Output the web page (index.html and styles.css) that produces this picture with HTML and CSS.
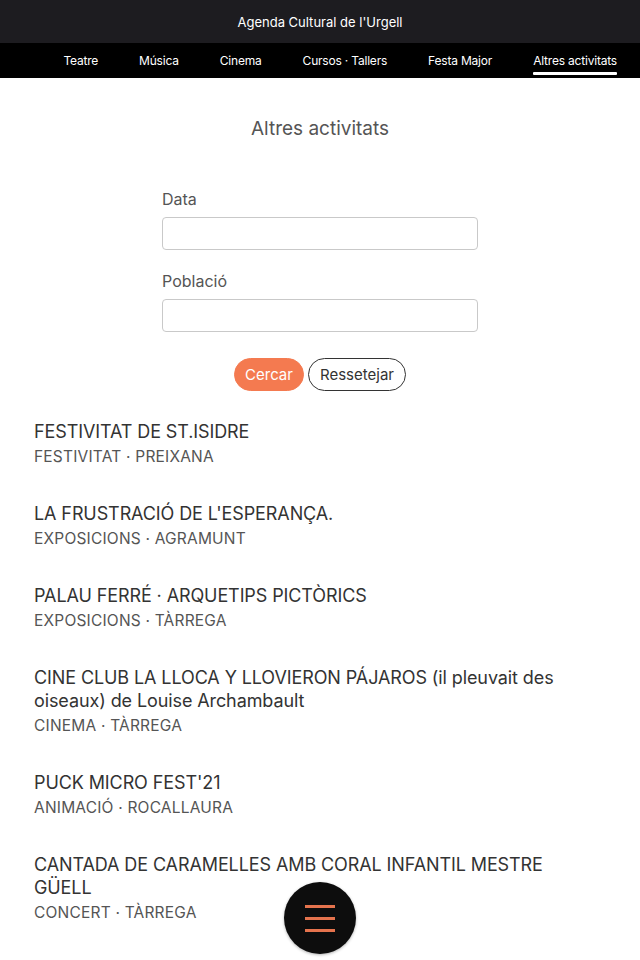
FILE: index.html
```html
<!DOCTYPE html>
<html lang="ca">
<head>
<meta charset="utf-8">
<title>Altres activitats</title>
<link rel="stylesheet" href="styles.css">
</head>
<body>
<header class="top">
  <div class="brand">Agenda Cultural de l'Urgell</div>
  <nav class="nav">
    <a class="nav-item">Teatre</a>
    <a class="nav-item">Música</a>
    <a class="nav-item">Cinema</a>
    <a class="nav-item">Cursos · Tallers</a>
    <a class="nav-item">Festa Major</a>
    <a class="nav-item active">Altres activitats</a>
  </nav>
</header>
<main class="main">
  <h1 class="page-title">Altres activitats</h1>
  <form class="filter">
    <label class="field-label">Data</label>
    <input class="field" type="text">
    <label class="field-label">Població</label>
    <input class="field field-last" type="text">
    <div class="actions">
      <button type="button" class="btn btn-primary">Cercar</button>
      <button type="button" class="btn btn-outline">Ressetejar</button>
    </div>
  </form>
  <ul class="events">
    <li class="event"><div class="event-title">FESTIVITAT DE ST.ISIDRE</div><div class="event-meta">FESTIVITAT · PREIXANA</div></li>
    <li class="event"><div class="event-title">LA FRUSTRACIÓ DE L'ESPERANÇA.</div><div class="event-meta">EXPOSICIONS · AGRAMUNT</div></li>
    <li class="event"><div class="event-title">PALAU FERRÉ · ARQUETIPS PICTÒRICS</div><div class="event-meta">EXPOSICIONS · TÀRREGA</div></li>
    <li class="event"><div class="event-title">CINE CLUB LA LLOCA Y LLOVIERON PÁJAROS (il pleuvait des oiseaux) de Louise Archambault</div><div class="event-meta">CINEMA · TÀRREGA</div></li>
    <li class="event"><div class="event-title">PUCK MICRO FEST'21</div><div class="event-meta">ANIMACIÓ · ROCALLAURA</div></li>
    <li class="event"><div class="event-title">CANTADA DE CARAMELLES AMB CORAL INFANTIL MESTRE GÜELL</div><div class="event-meta">CONCERT · TÀRREGA</div></li>
  </ul>
</main>
<button class="fab" type="button" aria-label="Menú">
  <span class="fab-bar"></span><span class="fab-bar"></span><span class="fab-bar"></span>
</button>
</body>
</html>
```
FILE: styles.css
```css
* { box-sizing: border-box; }
html, body { margin: 0; padding: 0; }
body {
  font-family: "Inter", "Noto Sans", sans-serif;
  background: #fff;
  color: #333;
  height: 960px;
  overflow: hidden;
}
.top { display: flex; flex-direction: column; }
.brand {
  background: #1d1c20;
  color: #fff;
  height: 43px;
  display: flex;
  align-items: center;
  justify-content: center;
  font-size: 13px;
}
.nav {
  background: #000;
  height: 35px;
  display: flex;
  align-items: center;
  justify-content: flex-end;
  padding-right: 23px;
}
.nav-item {
  color: #fff;
  font-size: 12px;
  height: 35px;
  display: flex;
  align-items: center;
  position: relative;
  margin-left: 41px;
  letter-spacing: -0.2px;
}
.nav-item:first-child { margin-left: 0; }
.nav-item.active::after {
  content: "";
  position: absolute;
  left: 0; right: 0;
  bottom: 3px;
  height: 3px;
  background: #fff;
  border-radius: 1px;
}
.main { display: flex; flex-direction: column; }
.page-title {
  margin: 39px 0 0;
  text-align: center;
  font-weight: 400;
  font-size: 19px;
  color: #555;
  line-height: 24px;
}
.filter {
  width: 316px;
  margin: 48px auto 0;
  display: flex;
  flex-direction: column;
}
.field-label {
  font-size: 16px;
  color: #555;
  line-height: 20px;
  margin-bottom: 8px;
}
.field {
  height: 33px;
  border: 1px solid #c9c9c9;
  border-radius: 4px;
  margin-bottom: 21px;
  font: inherit;
}
.field-last { margin-bottom: 26px; }
.actions { display: flex; justify-content: center; gap: 4px; }
.btn {
  font-family: inherit;
  font-size: 15px;
  height: 33px;
  border-radius: 17px;
  padding: 0;
  cursor: pointer;
}
.btn-primary { background: #f47a50; color: #fff; border: 1px solid #f47a50; width: 70px; }
.btn-outline { background: #fff; color: #333; border: 1px solid #333; width: 98px; }
.events { list-style: none; margin: 29px 0 0; padding: 0 44px 0 34px; display: flex; flex-direction: column; gap: 35px; }
.event-title { font-size: 18px; line-height: 23px; color: #333; letter-spacing: -0.1px; }
.event-meta { font-size: 15.5px; line-height: 20px; color: #555; margin-top: 4px; letter-spacing: 0.2px; }
.fab {
  position: fixed;
  left: 284px;
  top: 882px;
  width: 72px;
  height: 72px;
  border-radius: 50%;
  background: #0d0d0d;
  border: none;
  display: flex;
  flex-direction: column;
  align-items: center;
  justify-content: center;
  gap: 9px;
  box-shadow: 0 1px 3px rgba(0,0,0,0.3);
  padding: 0;
}
.fab-bar { display: block; width: 30px; height: 3px; background: #e5734d; }
```
